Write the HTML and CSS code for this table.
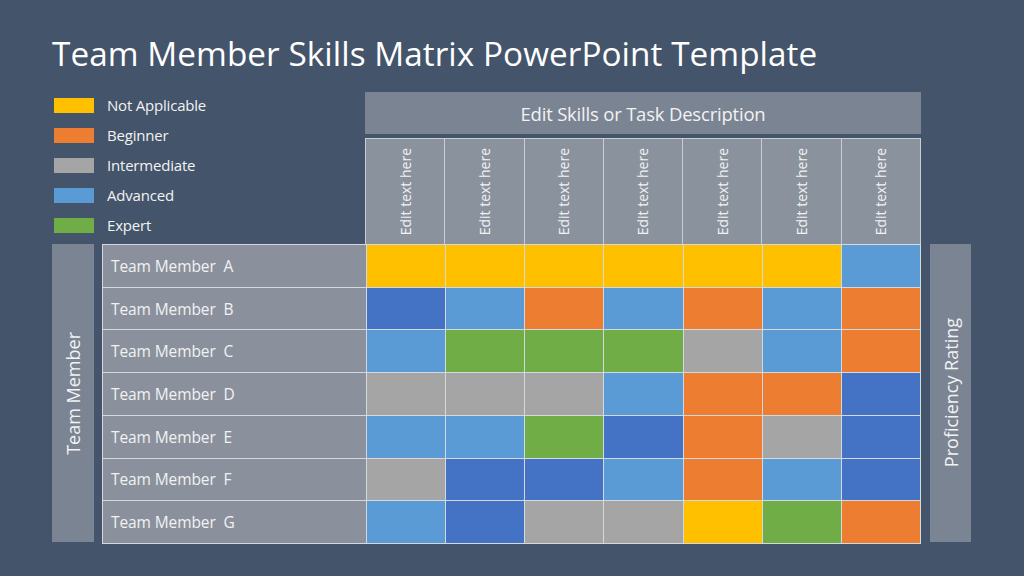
FILE: index.html
```html
<!DOCTYPE html>
<html>
<head>
<meta charset="utf-8">
<link rel="stylesheet" href="styles.css">
</head>
<body>
<div class="slide">
  <h1 class="title">Team Member Skills Matrix PowerPoint Template</h1>
  <div class="top">
    <ul class="legend">
      <li><span class="sw y"></span>Not Applicable</li>
      <li><span class="sw o"></span>Beginner</li>
      <li><span class="sw g"></span>Intermediate</li>
      <li><span class="sw lb"></span>Advanced</li>
      <li><span class="sw gr"></span>Expert</li>
    </ul>
    <div class="head">
      <div class="desc">Edit Skills or Task Description</div>
      <div class="cols">
        <div class="col"><span>Edit text here</span></div>
        <div class="col"><span>Edit text here</span></div>
        <div class="col"><span>Edit text here</span></div>
        <div class="col"><span>Edit text here</span></div>
        <div class="col"><span>Edit text here</span></div>
        <div class="col"><span>Edit text here</span></div>
        <div class="col"><span>Edit text here</span></div>
      </div>
    </div>
  </div>
  <div class="bottom">
    <div class="side"><span>Team Member</span></div>
    <div class="matrix">
      <div class="name">Team Member &nbsp;A</div>
      <div class="c y"></div><div class="c y"></div><div class="c y"></div><div class="c y"></div><div class="c y"></div><div class="c y"></div><div class="c lb"></div>
      <div class="name">Team Member &nbsp;B</div>
      <div class="c db"></div><div class="c lb"></div><div class="c o"></div><div class="c lb"></div><div class="c o"></div><div class="c lb"></div><div class="c o"></div>
      <div class="name">Team Member &nbsp;C</div>
      <div class="c lb"></div><div class="c gr"></div><div class="c gr"></div><div class="c gr"></div><div class="c g"></div><div class="c lb"></div><div class="c o"></div>
      <div class="name">Team Member &nbsp;D</div>
      <div class="c g"></div><div class="c g"></div><div class="c g"></div><div class="c lb"></div><div class="c o"></div><div class="c o"></div><div class="c db"></div>
      <div class="name">Team Member &nbsp;E</div>
      <div class="c lb"></div><div class="c lb"></div><div class="c gr"></div><div class="c db"></div><div class="c o"></div><div class="c g"></div><div class="c db"></div>
      <div class="name">Team Member &nbsp;F</div>
      <div class="c g"></div><div class="c db"></div><div class="c db"></div><div class="c lb"></div><div class="c o"></div><div class="c lb"></div><div class="c db"></div>
      <div class="name">Team Member &nbsp;G</div>
      <div class="c lb"></div><div class="c db"></div><div class="c g"></div><div class="c g"></div><div class="c y"></div><div class="c gr"></div><div class="c o"></div>
    </div>
    <div class="side right"><span>Proficiency Rating</span></div>
  </div>
</div>
</body>
</html>
```

FILE: styles.css
```css
* { box-sizing: border-box; }
html, body { margin: 0; padding: 0; }
body {
  background: #44546a;
  font-family: "Open Sans", "Noto Sans", sans-serif;
  color: #f2f2f2;
}
.slide {
  width: 1024px;
  height: 576px;
  padding: 0 53px 0 52px;
  display: flex;
  flex-direction: column;
}
.title {
  margin: 30px 0 0 0;
  font-size: 33.3px;
  font-weight: 400;
  line-height: 46px;
  height: 62px;
  color: #ffffff;
  letter-spacing: 0.05px;
}
.top {
  display: flex;
  height: 152px;
}
.legend {
  list-style: none;
  margin: 0;
  padding: 3px 0 0 2px;
  width: 313px;
  flex: 0 0 313px;
  display: flex;
  flex-direction: column;
  gap: 10px;
}
.legend li {
  display: flex;
  align-items: center;
  height: 20px;
  font-size: 15px;
  letter-spacing: -0.2px;
}
.sw {
  width: 40px;
  height: 15px;
  margin-right: 13px;
}
.head {
  width: 556px;
  display: flex;
  flex-direction: column;
  gap: 4px;
}
.desc {
  height: 42px;
  background: #7b8493;
  display: flex;
  align-items: center;
  justify-content: center;
  font-size: 18.5px;
  letter-spacing: -0.2px;
}
.cols {
  flex: 1;
  display: grid;
  grid-template-columns: repeat(7, 1fr);
  gap: 1px;
  background: #c9ced6;
  border: 1px solid #c9ced6;
  border-bottom: none;
}
.col {
  background: #8a929e;
  display: flex;
  align-items: center;
  justify-content: center;
}
.col span, .side span {
  writing-mode: vertical-rl;
  transform: rotate(180deg);
  white-space: nowrap;
}
.col span {
  font-size: 14px;
  letter-spacing: 0;
}
.bottom {
  display: flex;
  height: 300px;
  gap: 8px;
}
.side {
  width: 42px;
  height: 298px;
  background: #7b8493;
  display: flex;
  align-items: center;
  justify-content: center;
  font-size: 18px;
}
.side.right {
  width: 41px;
  margin-left: 1px;
}
.matrix {
  width: 819px;
  height: 300px;
  display: grid;
  grid-template-columns: 263px repeat(7, 1fr);
  grid-template-rows: repeat(7, 1fr);
  gap: 1px;
  background: #d4d9e0;
  border: 1px solid #d4d9e0;
}
.name {
  background: #8a919d;
  display: flex;
  align-items: center;
  padding-left: 8px;
  font-size: 15.5px;
  letter-spacing: -0.1px;
}
.y { background: #ffc000; }
.o { background: #ed7d31; }
.g { background: #a5a5a5; }
.lb { background: #5b9bd5; }
.gr { background: #70ad47; }
.db { background: #4472c4; }
```
